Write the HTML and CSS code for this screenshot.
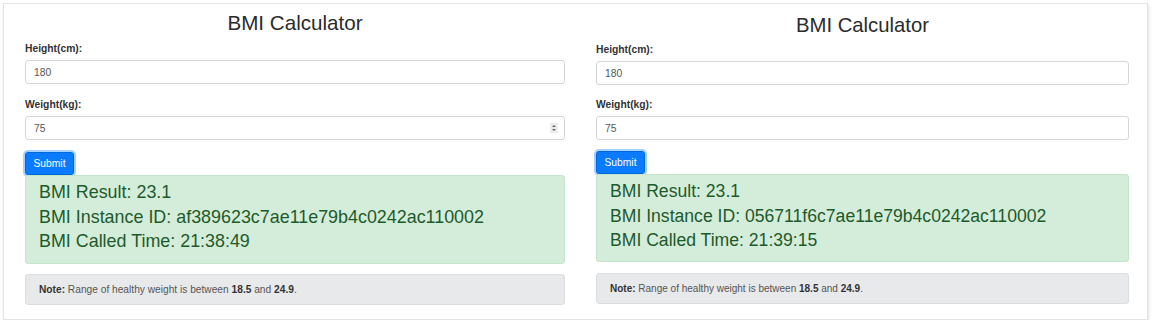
FILE: index.html
```html
<!DOCTYPE html>
<html lang="en">
<head>
    <meta charset="UTF-8">
    <meta name="viewport" content="width=device-width, initial-scale=1.0">
    <title>BMI Calculator</title>
    <link rel="stylesheet" href="styles.css">
</head>
<body>

    <div class="frame">
        <div class="panel panel-left">
            <h2 class="title">BMI Calculator</h2>
            <form class="bmi-form">
                <label class="field-label">Height(cm):</label>
                <div class="field"><input class="field-input" type="text" value="180"></div>
                <label class="field-label">Weight(kg):</label>
                <div class="field">
                    <input class="field-input" type="text" value="75">
                    <span class="spinner">
                        <span class="arrow-up"></span>
                        <span class="arrow-down"></span>
                    </span>
                </div>
                <button type="button" class="submit-btn">Submit</button>
            </form>
            <div class="result">
                <p>BMI Result: 23.1</p>
                <p>BMI Instance ID: af389623c7ae11e79b4c0242ac110002</p>
                <p>BMI Called Time: 21:38:49</p>
            </div>
            <div class="note">
                <strong>Note:</strong> Range of healthy weight is between <strong>18.5</strong> and <strong>24.9</strong>.
            </div>
        </div>

        <div class="panel panel-right">
            <h2 class="title">BMI Calculator</h2>
            <form class="bmi-form">
                <label class="field-label">Height(cm):</label>
                <div class="field"><input class="field-input" type="text" value="180"></div>
                <label class="field-label">Weight(kg):</label>
                <div class="field"><input class="field-input" type="text" value="75"></div>
                <button type="button" class="submit-btn">Submit</button>
            </form>
            <div class="result">
                <p>BMI Result: 23.1</p>
                <p>BMI Instance ID: 056711f6c7ae11e79b4c0242ac110002</p>
                <p>BMI Called Time: 21:39:15</p>
            </div>
            <div class="note">
                <strong>Note:</strong> Range of healthy weight is between <strong>18.5</strong> and <strong>24.9</strong>.
            </div>
        </div>
    </div>

</body>
</html>
```

FILE: styles.css
```css
* {
    margin: 0;
    padding: 0;
    box-sizing: border-box;
}

body {
    font-family: 'Liberation Sans', Arial, sans-serif;
    background-color: #fff;
    color: #212529;
}

.frame {
    margin: 3px 0 0 3px;
    width: 1145px;
    height: 317px;
    border: 1px solid #e4e4e4;
    box-shadow: 1px 2px 3px rgba(0, 0, 0, 0.12);
    background-color: #fff;
    display: grid;
    grid-template-columns: 540px 533px;
    column-gap: 31px;
    padding: 0 18px 0 21px;
}

.title {
    font-size: 20.6px;
    font-weight: normal;
    text-align: center;
    color: #2b2b2b;
    line-height: 24px;
    margin-top: 7px;
    height: 29px;
}

.panel-right .title {
    font-size: 20.3px;
    margin-top: 9px;
    height: 28px;
}

.field-label {
    display: block;
    font-size: 10.3px;
    font-weight: bold;
    color: #333;
    line-height: 12px;
    margin-top: 3px;
    margin-bottom: 5px;
}

.field {
    position: relative;
    margin-bottom: 14px;
}

.panel-left .field {
    margin-bottom: 15px;
}

.field-input {
    display: block;
    width: 100%;
    height: 24px;
    border: 1px solid #d6d6d6;
    border-radius: 3px;
    padding: 0 8px;
    font-family: 'Liberation Sans', Arial, sans-serif;
    font-size: 10.3px;
    color: #555;
    background-color: #fff;
    outline: none;
}

.spinner {
    position: absolute;
    right: 7px;
    top: 7px;
    width: 8px;
    height: 10px;
    background-color: #ececec;
    display: flex;
    flex-direction: column;
    align-items: center;
    justify-content: center;
    gap: 2px;
}

.arrow-up {
    border-left: 2px solid transparent;
    border-right: 2px solid transparent;
    border-bottom: 2px solid #666;
}

.arrow-down {
    border-left: 2px solid transparent;
    border-right: 2px solid transparent;
    border-top: 2px solid #666;
}

.submit-btn {
    display: block;
    margin-top: -3px;
    width: 49px;
    height: 23px;
    background-color: #0a7bff;
    color: #fff;
    border: 1px solid #0069d9;
    border-radius: 3px;
    font-family: 'Liberation Sans', Arial, sans-serif;
    font-size: 10.3px;
    box-shadow: 0 0 0 2px rgba(0, 123, 255, 0.35);
    cursor: pointer;
}

.result {
    margin-top: 0;
    height: 89px;
    background-color: #d4edda;
    border: 1px solid #c3e6cb;
    border-radius: 3px;
    color: #1d5a2a;
    font-size: 17.9px;
    line-height: 24.5px;
    padding: 4px 13px;
}

.panel-right .result {
    height: 88px;
    font-size: 17.6px;
}

.note {
    margin-top: 10px;
    height: 31px;
    background-color: #e8e9eb;
    border: 1px solid #dcdde0;
    border-radius: 3px;
    font-size: 10.2px;
    color: #555;
    line-height: 29px;
    padding: 0 13px;
}

.panel-right .note {
    margin-top: 11px;
    font-size: 10px;
}

.note strong {
    color: #333;
}
```
